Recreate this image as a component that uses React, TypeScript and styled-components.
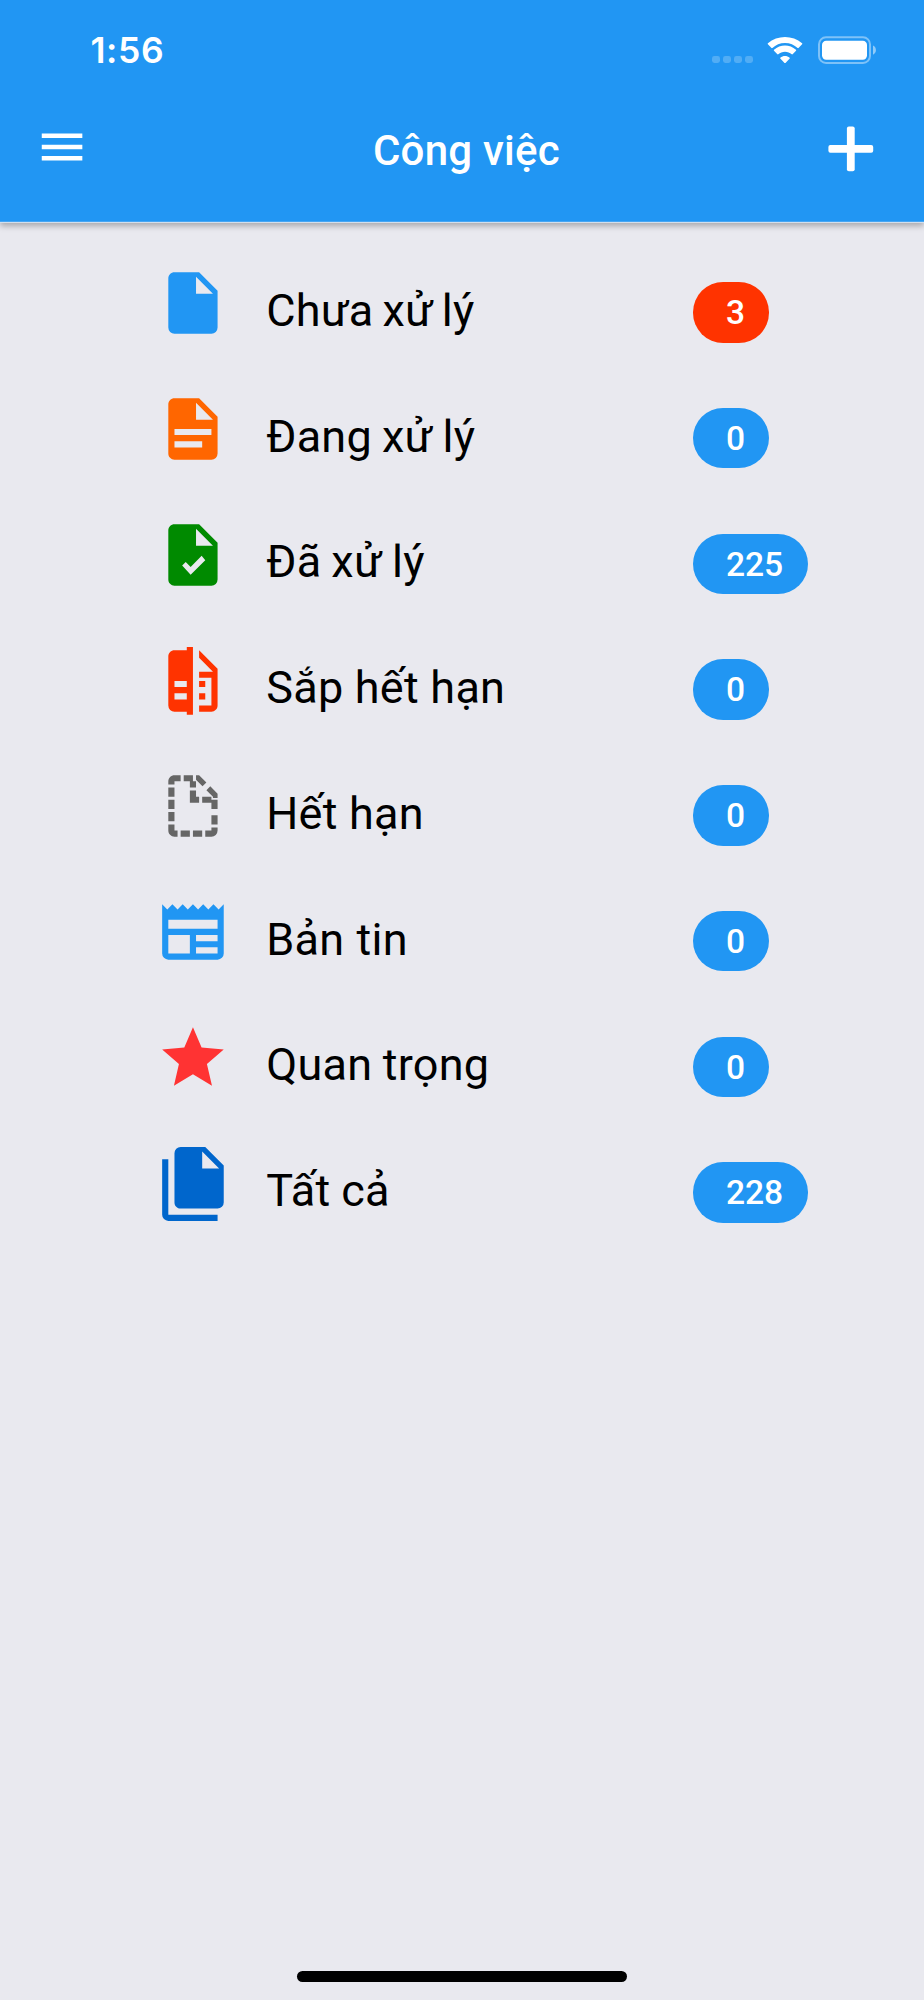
import React from "react";
import styled, { createGlobalStyle } from "styled-components";

const GlobalStyle = createGlobalStyle`
  html, body { margin: 0; padding: 0; background: #e9e9ef; }
  * { box-sizing: border-box; }
`;

const Screen = styled.div`
  width: 924px;
  height: 2000px;
  display: flex;
  flex-direction: column;
  background: #e9e9ef;
  font-family: Roboto, "Noto Sans", sans-serif;
  overflow: hidden;
`;

const Header = styled.header`
  height: 223px;
  flex: none;
  display: flex;
  flex-direction: column;
  background: #2196f3;
  color: #fff;
  border-bottom: 1px solid #d3dfec;
  box-shadow: inset 0 -1px 0 #45a6f4, 0 3px 6px rgba(0, 0, 0, 0.28);
`;

const StatusBar = styled.div`
  height: 100px;
  display: flex;
  align-items: center;
  justify-content: space-between;
  padding: 0 48px 0 90.5px;
`;

const Clock = styled.span`
  font: 600 35.5px/42px Inter, sans-serif;
  letter-spacing: 0.6px;
  margin-top: 1px;
`;

const StatusIcons = styled.div`
  display: flex;
  align-items: center;
`;

const Dots = styled.div`
  display: flex;
  gap: 3.2px;
  margin: 19px 14px 0 0;
`;

const Dot = styled.i`
  width: 7.9px;
  height: 7.9px;
  border-radius: 2.4px;
  background: rgba(255, 255, 255, 0.22);
`;

const Wifi = styled.svg`
  width: 36px;
  height: 28px;
  margin-right: 15px;
`;

const Battery = styled.svg`
  width: 58px;
  height: 28px;
`;

const NavBar = styled.div`
  height: 98px;
  display: grid;
  grid-template-columns: 96px 1fr 96px;
  align-items: center;
  padding: 0 25px 0 35.4px;
`;

const MenuIcon = styled.svg`
  width: 54.1px;
  height: 54.1px;
  margin-bottom: 4px;
`;

const PlusIcon = styled.svg`
  width: 46px;
  height: 46px;
  justify-self: end;
  margin-right: 25px;
`;

const Title = styled.h1`
  margin: 3px 1.5px 0 0;
  font-size: 42px;
  line-height: 50px;
  font-weight: 500;
  letter-spacing: 0.25px;
  text-align: center;
`;

const List = styled.ul`
  list-style: none;
  margin: 0;
  padding: 25px 0 0;
  flex: 1;
`;

const Row = styled.li`
  height: 125.75px;
  display: grid;
  grid-template-columns: 110px 427px auto;
  justify-content: start;
  align-items: center;
  padding-left: 156.2px;
`;

const RowIcon = styled.svg`
  width: 73.9px;
  height: 73.9px;
  margin-bottom: 15px;
`;

const Label = styled.span<{ $wordGap?: number }>`
  font-size: 45px;
  line-height: 54px;
  letter-spacing: 0.25px;
  word-spacing: ${(p) => p.$wordGap ?? 0}px;
  color: #000;
  white-space: nowrap;
`;

const Badge = styled.span<{ $urgent?: boolean }>`
  height: 60.4px;
  margin-top: 3px;
  padding: 0 24.5px 0 32.7px;
  border-radius: 30.2px;
  background: ${(p) => (p.$urgent ? "#ff3300" : "#2196f3")};
  color: #fff;
  font-size: 33.6px;
  font-weight: 500;
  line-height: 61px;
`;

const HomeIndicator = styled.div`
  width: 330px;
  height: 11px;
  flex: none;
  margin: 0 auto 18px;
  border-radius: 6px;
  background: #000;
`;

type Item = {
  label: string;
  count: number;
  color: string;
  path: string;
  urgent?: boolean;
  wordGap?: number;
};

const items: Item[] = [
  {
    label: "Chưa xử lý",
    count: 3,
    color: "#2196f3",
    urgent: true,
    wordGap: -2.6,
    path: "M13,9V3.5L18.5,9M6,2C4.89,2 4,2.89 4,4V20A2,2 0 0,0 6,22H18A2,2 0 0,0 20,20V8L14,2H6Z",
  },
  {
    label: "Đang xử lý",
    count: 0,
    color: "#ff6600",
    wordGap: -1.5,
    path: "M13,9H18.5L13,3.5V9M6,2H14L20,8V20A2,2 0 0,1 18,22H6C4.89,22 4,21.1 4,20V4C4,2.89 4.89,2 6,2M15,18V16H6V18H15M18,14V12H6V14H18Z",
  },
  {
    label: "Đã xử lý",
    count: 225,
    color: "#008a00",
    wordGap: -1.4,
    path: "M13,9H18.5L13,3.5V9M6,2H14L20,8V20A2,2 0 0,1 18,22H6C4.89,22 4,21.1 4,20V4C4,2.89 4.89,2 6,2M11.25,18.46L16,13.71L14.83,12.3L11.25,15.88L9.66,14.3L8.5,15.46L11.25,18.46Z",
  },
  {
    label: "Sắp hết hạn",
    count: 0,
    color: "#ff3300",
    path: "M10,18H6V16H10V18M10,14H6V12H10V14M10,1V2H6C4.89,2 4,2.89 4,4V20A2,2 0 0,0 6,22H10V23H12V1H10M20,8V20C20,21.11 19.11,22 18,22H14V20H18V11H14V9H18.5L14,4.5V2L20,8M16,14H14V12H16V14M16,18H14V16H16V18Z",
  },
  {
    label: "Hết hạn",
    count: 0,
    color: "#666666",
    path: "M13,9H14V11H11V7H13V9M18.5,9L16.38,6.88L17.63,5.63L20,8V9.4H18.5V9M15,9H18V11H15V9M18,10H20V13H18V10M13,3.5V2H14L16.36,4.36L15.11,5.61L13,3.5M9,2H12V4H13V6H11V4H9V2M6,2H8V4H6V5H4V4C4,2.89 4.89,2 6,2M20,20A2,2 0 0,1 18,22H16V20H18V19H20V20M18,15H20V18H18V15M12,22V20H15V22H12M8,22V20H11V22H8M6,22C4.89,22 4,21.1 4,20V18H6V20H7V22H6M4,14H6V17H4V14M4,10H6V13H4V10M4,6H6V9H4V6Z",
  },
  {
    label: "Bản tin",
    count: 0,
    color: "#2196f3",
    wordGap: 0.8,
    path: "M20,11H4V8H20M20,15H13V13H20M20,19H13V17H20M11,19H4V13H11M20.33,4.67L18.67,3L17,4.67L15.33,3L13.67,4.67L12,3L10.33,4.67L8.67,3L7,4.67L5.33,3L3.67,4.67L2,3V19A2,2 0 0,0 4,21H20A2,2 0 0,0 22,19V3L20.33,4.67Z",
  },
  {
    label: "Quan trọng",
    count: 0,
    color: "#ff3333",
    wordGap: -1,
    path: "M12,17.27L18.18,21L16.54,13.97L22,9.24L14.81,8.62L12,2L9.19,8.62L2,9.24L7.45,13.97L5.82,21L12,17.27Z",
  },
  {
    label: "Tất cả",
    count: 228,
    color: "#0066cc",
    wordGap: -0.6,
    path: "M15,7H20.5L15,1.5V7M8,0H16L22,6V18A2,2 0 0,1 20,20H8C6.89,20 6,19.1 6,18V2A2,2 0 0,1 8,0M4,4V22H20V24H4A2,2 0 0,1 2,22V4H4Z",
  },
];

export default function App() {
  return (
    <Screen>
      <GlobalStyle />
      <Header>
        <StatusBar>
          <Clock>1:56</Clock>
          <StatusIcons>
            <Dots>
              <Dot />
              <Dot />
              <Dot />
              <Dot />
            </Dots>
            <Wifi viewBox="0 -0.8 36 28" fill="#fff">
              <path d="M18 6.1c4.9 0 9.3 1.9 12.6 5.1.3.2.6.2.9 0l3.6-3.7c.3-.3.3-.7 0-1C25.6-1.9 10.4-1.9.9 6.5c-.3.3-.3.7 0 1l3.6 3.7c.3.2.6.2.9 0C8.7 8 13.1 6.1 18 6.1Z" />
              <path d="M18 15c2.6 0 4.9.9 6.7 2.5.3.2.6.2.9 0l3.4-3.5c.3-.3.3-.7 0-1-6.2-5.7-15.8-5.7-22 0-.3.3-.3.7 0 1l3.4 3.5c.3.2.6.2.9 0C13.1 15.9 15.4 15 18 15Z" />
              <path d="M22.7 21.8c.3-.3.3-.7 0-.9-2.7-2.3-6.7-2.3-9.4 0-.3.2-.3.6 0 .9l4.2 4.3c.3.3.7.3 1 0l4.2-4.3Z" />
            </Wifi>
            <Battery viewBox="0 0 58 28">
              <rect x="1" y="1.3" width="51" height="25.6" rx="7" fill="none" stroke="#fff" strokeOpacity=".42" strokeWidth="2" />
              <rect x="4" y="4.8" width="45" height="19" rx="4.2" fill="#fff" />
              <path d="M55 9.5c3.9 1.5 3.9 7.7 0 9.2Z" fill="#fff" fillOpacity=".5" />
            </Battery>
          </StatusIcons>
        </StatusBar>
        <NavBar>
          <MenuIcon viewBox="0 0 24 24" fill="#fff">
            <path d="M3,6H21V8H3V6M3,11H21V13H3V11M3,16H21V18H3V16Z" />
          </MenuIcon>
          <Title>Công việc</Title>
          <PlusIcon viewBox="0 0 46 46" fill="#fff">
            <rect x="0.4" y="19" width="44.8" height="7.8" rx="2" />
            <rect x="18.9" y="0.4" width="7.8" height="44.8" rx="2" />
          </PlusIcon>
        </NavBar>
      </Header>
      <List>
        {items.map((item) => (
          <Row key={item.label}>
            <RowIcon viewBox="0 0 24 24" fill={item.color} fillRule="evenodd">
              <path d={item.path} />
            </RowIcon>
            <Label $wordGap={item.wordGap}>{item.label}</Label>
            <Badge $urgent={item.urgent}>{item.count}</Badge>
          </Row>
        ))}
      </List>
      <HomeIndicator />
    </Screen>
  );
}
